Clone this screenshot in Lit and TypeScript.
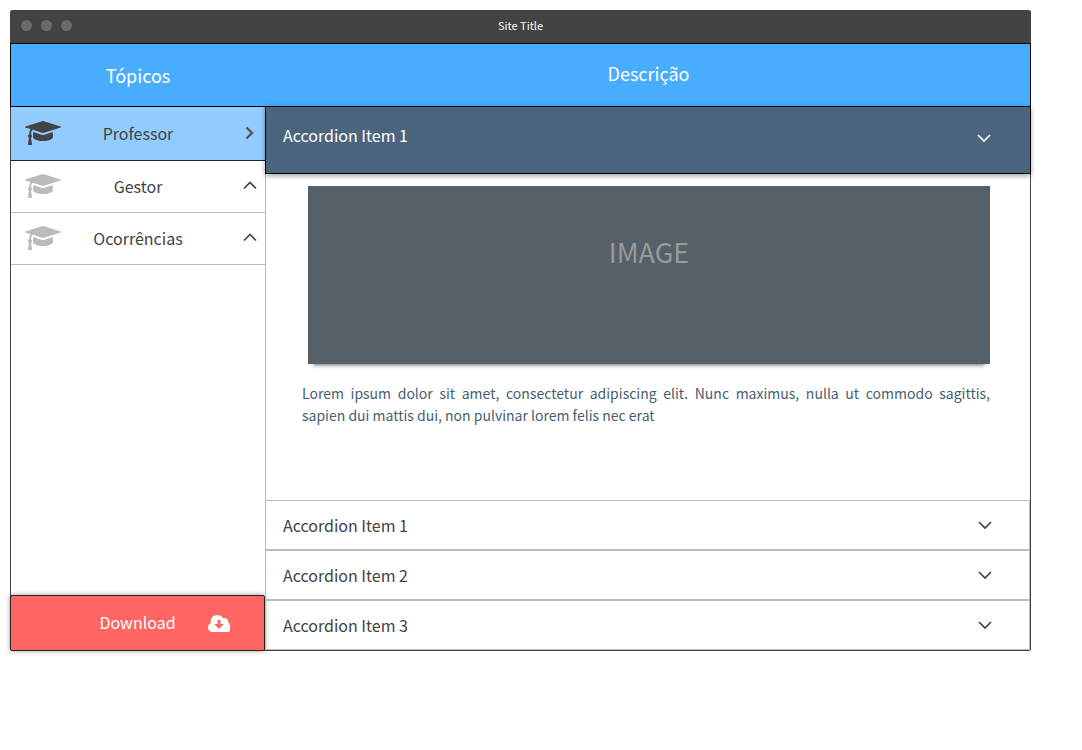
import { LitElement, html, css, svg } from "lit";
import { customElement, state } from "lit/decorators.js";

const capIcon = html`<svg class="cap" viewBox="0 128 2304 1536" aria-hidden="true"><path fill="currentColor" d="M1774 836l18 316q4 69-82 128t-235 93.5-323 34.5-323-34.5-235-93.5-82-128l18-316 574 181q22 7 48 7t48-7zM2304 512q0 23-22 31l-1120 352q-4 1-10 1t-10-1l-652-206q-43 34-71 111.5t-34 178.5q63 36 63 109 0 69-58 107l58 433q2 14-8 25-9 11-24 11h-192q-15 0-24-11-10-11-8-25l58-433q-58-38-58-107 0-73 65-111 11-207 98-330l-333-104q-22-8-22-31t22-31l1120-352q4-1 10-1t10 1l1120 352q22 8 22 31z"/></svg>`;

const chevrons = {
  right: svg`<path d="M3.500 1.500l5.500 5.500-5.500 5.500" stroke-width="2.400"/>`,
  up: svg`<path d="M1 9.500l6-6 6 6" stroke-width="1.700"/>`,
  down: svg`<path d="M1 4l6 6 6-6" stroke-width="1.700"/>`,
};

const chevron = (dir: keyof typeof chevrons) =>
  html`<svg class="chevron" viewBox="0 0 14 14" fill="none" stroke="currentColor" aria-hidden="true">${chevrons[dir]}</svg>`;

@customElement("app-root")
export class AppRoot extends LitElement {
  @state() private topic = 0;

  private topics = ["Professor", "Gestor", "Ocorrências"];
  private items = ["Accordion Item 1", "Accordion Item 2", "Accordion Item 3"];

  static styles = css`
    :host {
      display: block;
      padding: 10px 51px 24px 10px;
      font-family: "Noto Sans CJK SC", "Noto Sans", sans-serif;
      color: #434343;
    }
    * { box-sizing: border-box; }
    button {
      font: inherit;
      color: inherit;
      margin: 0;
      border: 0;
      background: none;
      cursor: pointer;
    }
    h1, h2, p { margin: 0; font-weight: 400; }
    svg { display: block; flex: none; }
    .window {
      border: 1px solid #434343;
      border-radius: 2px;
      background: #fff;
    }
    .titlebar {
      display: grid;
      grid-template-columns: 1fr auto 1fr;
      align-items: center;
      height: 32px;
      padding: 0 10px 4px;
      background: #434343;
      color: #fff;
    }
    .dots { display: flex; gap: 9px; }
    .dot { width: 11px; height: 11px; border-radius: 50%; background: #6b6b6b; }
    .title { font-size: 11px; line-height: 16px; }
    .header {
      display: grid;
      grid-template-columns: 254px 1fr;
      align-items: center;
      height: 64px;
      margin: 0 -1px;
      border: 1px solid #000;
      background: #48acff;
      color: #fff;
      text-align: center;
    }
    .heading { font-size: 18px; line-height: 28px; }
    .heading.wide { padding: 0 0 4px 2px; }
    .body { display: grid; grid-template-columns: 254px 1fr; }
    .side { display: flex; flex-direction: column; }
    .topic {
      display: grid;
      grid-template-columns: 36px 1fr 42px;
      align-items: center;
      width: 100%;
      height: 52px;
      padding: 0 8px 2px 14px;
      border-bottom: 1px solid #bbb;
      font-size: 16px;
      line-height: 24px;
    }
    .topic .cap { color: #bbb; }
    .topic .chevron { justify-self: end; }
    .topic.active {
      height: 54px;
      background: #92ccff;
      border-color: #222;
    }
    .topic.active .cap { color: #434343; }
    .topic.active .chevron { color: #555; }
    .cap { width: 36px; height: 24px; }
    .chevron { width: 14px; height: 14px; }
    .download {
      display: grid;
      grid-template-columns: 1fr 22px;
      align-items: center;
      height: 56px;
      margin: auto 0 -1px -1px;
      padding: 0 34px 0 56px;
      border: 1px solid #222;
      border-radius: 2px;
      background: #ff6561;
      box-shadow: 0 0 5px rgba(0, 0, 0, 0.4);
      color: #fff;
      font-size: 16px;
      line-height: 24px;
    }
    .download span { padding-bottom: 2px; }
    .cloud { width: 22px; height: 18px; }
    .main { border-left: 1px solid #bbb; }
    .acc {
      display: flex;
      align-items: center;
      justify-content: space-between;
      width: 100%;
      height: 50px;
      padding: 0 37px 0 17px;
      border: 1px solid #bbb;
      border-left: 0;
      font-size: 16px;
      line-height: 24px;
      text-align: left;
    }
    .acc.open {
      width: auto;
      height: 68px;
      margin: -1px -1px 0;
      padding: 0 39px 4px 17px;
      border: 1px solid #000;
      background: #4a657d;
      box-shadow: 0 2px 5px rgba(0, 0, 0, 0.35);
      color: #fff;
    }
    .acc.open span { padding-bottom: 6px; }
    .acc-wrap { display: grid; }
    .panel { min-height: 326px; padding: 12px 40px 0 36px; }
    .image {
      display: grid;
      justify-items: center;
      height: 178px;
      margin-left: 6px;
      padding-top: 45px;
      background: #566068;
      box-shadow: 0 6px 4px -5px rgba(0, 0, 0, 0.6);
      color: #999;
      font-size: 27px;
      line-height: 42px;
    }
    .copy {
      margin-top: 18px;
      color: #475e71;
      font-size: 14px;
      line-height: 22px;
      text-align: justify;
    }
  `;

  render() {
    return html`
      <div class="window">
        <div class="titlebar">
          <div class="dots"><span class="dot"></span><span class="dot"></span><span class="dot"></span></div>
          <h1 class="title">Site Title</h1>
        </div>
        <div class="header">
          <h2 class="heading">Tópicos</h2>
          <h2 class="heading wide">Descrição</h2>
        </div>
        <div class="body">
          <nav class="side">
            ${this.topics.map((t, i) => html`
              <button class="topic ${i === this.topic ? "active" : ""}" @click=${() => (this.topic = i)}>
                ${capIcon}<span>${t}</span>${chevron(i === this.topic ? "right" : "up")}
              </button>`)}
            <button class="download">
              <span>Download</span>
              <svg class="cloud" viewBox="0 0 22 18" aria-hidden="true"><path fill="currentColor" fill-rule="evenodd" d="M4.500 18A4.500 4.500 0 0 1 0 13.500C0 11.300 1 10 2.700 9.200C2 4.500 5 1 9.200 1C12 1 14.200 2.300 15.300 4.600C18 3.400 20.800 5.200 20.300 8.600C21.500 9.300 22 10.500 22 12V16Q22 18 20 18zM9.500 6v4H6.200l4.800 5 4.800-5h-3.300v-4z"/></svg>
            </button>
          </nav>
          <main class="main">
            <div class="acc-wrap">
              <button class="acc open" aria-expanded="true"><span>Accordion Item 1</span>${chevron("down")}</button>
            </div>
            <div class="panel">
              <div class="image" role="img" aria-label="IMAGE">IMAGE</div>
              <p class="copy">Lorem ipsum dolor sit amet, consectetur adipiscing elit. Nunc maximus, nulla ut commodo sagittis, sapien dui mattis dui, non pulvinar lorem felis nec erat</p>
            </div>
            ${this.items.map((t) => html`
              <button class="acc" aria-expanded="false"><span>${t}</span>${chevron("down")}</button>`)}
          </main>
        </div>
      </div>
    `;
  }
}
